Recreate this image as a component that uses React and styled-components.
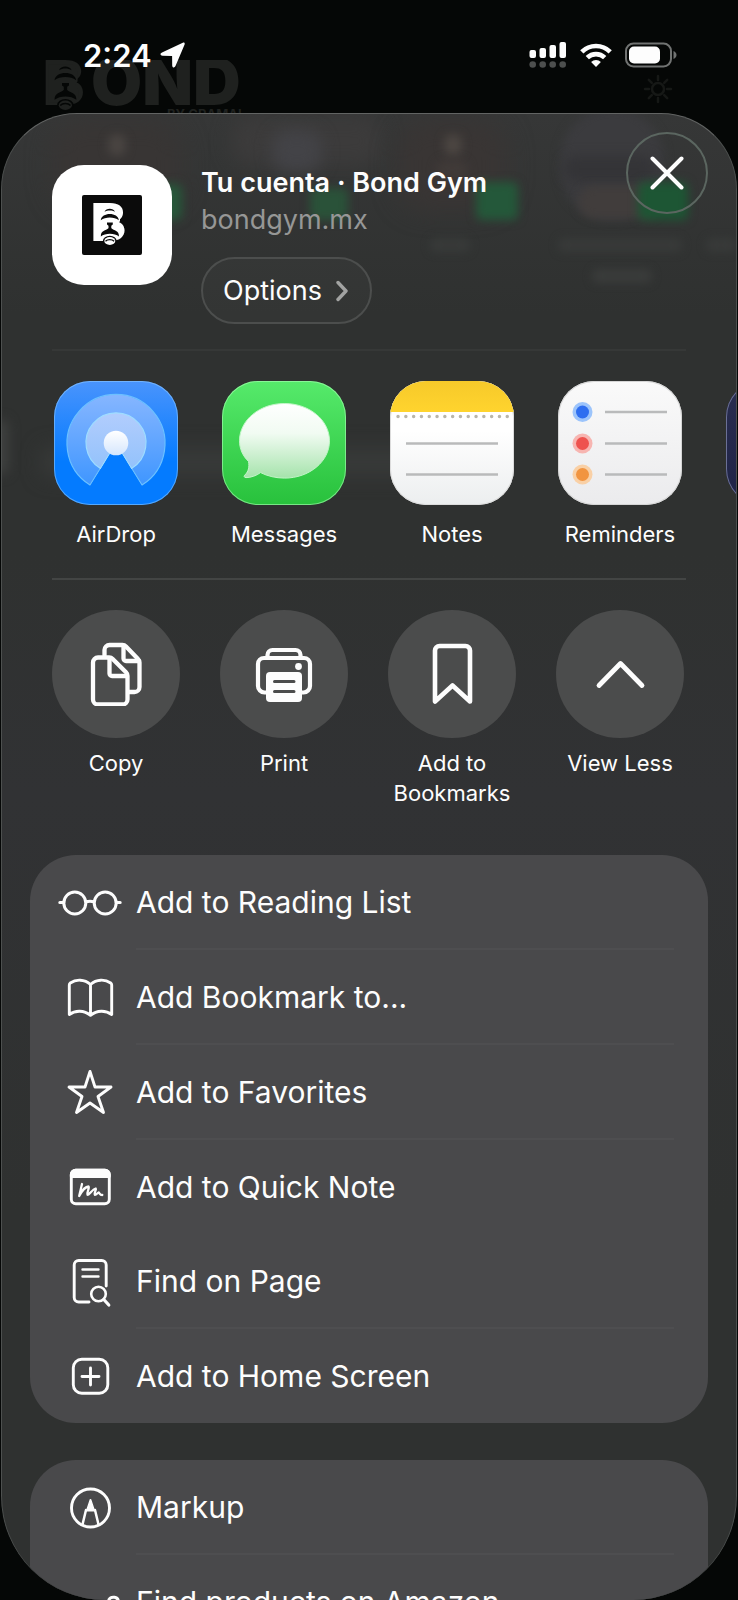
import React from 'react';
import styled, { createGlobalStyle } from 'styled-components';

const WHITE = '#fdfdfd';
const BLACK = '#050706';
const SHEET = '#2f3130';
const CARD = '#49494b';
const CIRCLE = '#4b4c4c';
const GHOST = '#1f211f';
const GREYTEXT = '#969796';

const GlobalStyle = createGlobalStyle`
  * {
    box-sizing: border-box;
  }
  body {
    margin: 0;
    background: ${BLACK};
    color: ${WHITE};
    font-family: Inter, 'Liberation Sans', sans-serif;
  }
  button {
    border: 0;
    padding: 0;
    background: none;
    color: inherit;
    font: inherit;
    cursor: pointer;
  }
  svg {
    display: block;
  }
`;

const Screen = styled.div`
  position: relative;
  height: 100vh;
  overflow: hidden;
  display: flex;
  flex-direction: column;
`;

/* dimmed page that stays behind the sheet */
const DimmedPage = styled.div`
  position: absolute;
  top: 0;
  left: 0;
  right: 0;
  height: 120px;
  padding: 60px 65px 0 45px;
  display: flex;
  justify-content: space-between;
  align-items: flex-start;
`;

const StatusBar = styled.header`
  position: relative;
  flex: none;
  height: 113px;
  padding: 0 60px 3px 83px;
  display: flex;
  align-items: center;
  justify-content: space-between;
`;

const StatusGroup = styled.div`
  display: flex;
  align-items: center;
  gap: ${props => props.$gap}px;
`;

const Clock = styled.span`
  font-size: 31px;
  font-weight: 600;
`;

const Sheet = styled.main`
  position: relative;
  flex: 1;
  min-height: 0;
  margin: 0 1px;
  overflow: hidden;
  border: 1px solid #4d504f;
  border-top-color: #626463;
  border-bottom: 0;
  border-radius: 76px 76px 104px 104px;
  background: linear-gradient(#363737, ${SHEET} 200px, #2f3130 440px, #313234 680px, #2f3130 1100px);
`;

const Glow = styled.div`
  position: absolute;
  left: ${props => props.$x}px;
  top: ${props => props.$y}px;
  width: ${props => props.$w}px;
  height: ${props => props.$h}px;
  border-radius: ${props => props.$r || 6}px;
  background: ${props => props.$color};
  filter: blur(${props => props.$blur || 5}px);
`;

const Content = styled.div`
  position: relative;
`;

const SiteHeader = styled.div`
  display: flex;
  align-items: flex-start;
  padding: 18px 28px 0 50px;
`;

const SiteIcon = styled.div`
  flex: none;
  width: 120px;
  height: 120px;
  margin-top: 33px;
  border-radius: 32px;
  background: #fff;
  display: flex;
  align-items: center;
  justify-content: center;
`;

const SiteInfo = styled.div`
  flex: 1;
  min-width: 0;
  margin: 32px 0 0 29px;
`;

const Title = styled.h1`
  margin: 0;
  font-size: 27px;
  font-weight: 600;
  line-height: 38px;
  white-space: nowrap;
`;

const Domain = styled.p`
  margin: 0;
  font-size: 27px;
  line-height: 36px;
  color: ${GREYTEXT};
`;

const OptionsButton = styled.button`
  margin-top: 19px;
  height: 67px;
  padding: 0 22px 0 20px;
  border: 2px solid #4c4e4d;
  border-radius: 34px;
  background: rgba(255, 255, 255, 0.02);
  display: flex;
  align-items: center;
  gap: 14px;
  font-size: 27px;
`;

const CloseButton = styled.button`
  flex: none;
  width: 82px;
  height: 82px;
  border: 2px solid #5b6660;
  border-radius: 50%;
  display: flex;
  align-items: center;
  justify-content: center;
`;

const Divider = styled.hr`
  height: 2px;
  margin: ${props => props.$top}px 50px 0;
  border: 0;
  background: ${props => props.$color};
`;

const TileRow = styled.div`
  display: flex;
  gap: 40px;
  padding: ${props => props.$top}px 0 0 50px;
`;

const Tile = styled.button`
  flex: none;
  width: 128px;
  display: flex;
  flex-direction: column;
  align-items: center;
  gap: ${props => props.$gap}px;
  font-size: 22px;
  line-height: 30px;
`;

const AppIcon = styled.span`
  width: 124px;
  height: 124px;
  border-radius: 36px;
  overflow: hidden;
  background: ${props => props.$fill};
  box-shadow: inset 0 0 0 1px ${props => props.$edge};
`;

const Circle = styled.span`
  width: 128px;
  height: 128px;
  border-radius: 50%;
  background: ${CIRCLE};
  display: flex;
  align-items: center;
  justify-content: center;
`;

const Card = styled.ul`
  list-style: none;
  margin: ${props => props.$top}px 28px 0;
  padding: 0 34px 0 28px;
  border-radius: 46px;
  background: ${CARD};
`;

const Item = styled.li`
  display: flex;
`;

const ItemButton = styled.button`
  flex: 1;
  display: flex;
  align-items: center;
  gap: 14px;
  text-align: left;
`;

const ItemLabel = styled.span`
  flex: 1;
  height: ${props => (props.$line ? 95 : 94)}px;
  line-height: 95px;
  border-bottom: ${props => (props.$line ? '2px solid #4e4e50' : '0')};
  font-size: 30px;
  white-space: nowrap;
`;

const LineIcon = styled.svg.attrs({
  'aria-hidden': true,
  fill: 'none',
  strokeLinecap: 'round',
  strokeLinejoin: 'round',
})`
  flex: none;
  stroke: ${props => props.$color || WHITE};
`;

// B with a barbell cut out of its stem, the counters are filled in first
const BarbellB = ({ ink, ground }) => (
  <g>
    <text x="9" y="46" fontFamily="Inter" fontWeight="900" fontSize="52" fill={ink}>B</text>
    <path d="M14 12h20l4 6v8l-2 3 3 5v6l-4 4H14z" fill={ink} />
    <path d="M22.500 16.800c1.500-4.200 9-4.200 10.500 0-3-1.800-7.500-1.800-10.500 0z" fill={ground} />
    <path d="M18.800 25.300c.5-8.300 17.500-8.300 18 0-4.500-3.600-13.500-3.600-18 0z" fill={ground} />
    <path d="M25 27.500h5.800v2l-1.500 1.200v4h-2.800v-4l-1.500-1.200z" fill={ground} />
    <path d="M18.800 41.500c0-6.500 5-5.500 7.700-8.200h2.800c2.700 2.700 7.700 1.700 7.700 8.200-4.500-3.800-13.700-3.800-18.200 0z" fill={ground} />
    <ellipse cx="27.800" cy="46" rx="6.900" ry="5.200" fill={ground} />
    <ellipse cx="27.800" cy="46" rx="5.500" ry="3.900" fill={ink} />
    <path d="M23.500 46.200c2-2.200 6.600-2.200 8.600 0" fill="none" stroke={ground} strokeWidth="1.300" />
  </g>
);

const DimmedLogo = () => (
  <svg width="204" height="60" viewBox="0 0 204 60">
    <g transform="translate(-13 -10) scale(1.200)">
      <BarbellB ink={GHOST} ground={BLACK} />
    </g>
    <text x="46" y="45" fontFamily="Inter" fontWeight="900" fontSize="66" fill={GHOST}>OND</text>
    <text x="122" y="59" fontFamily="Inter" fontWeight="700" fontSize="13" fill={GHOST}>BY GRAMAL</text>
  </svg>
);

const Sun = () => (
  <LineIcon width="30" height="60" viewBox="0 0 30 60" $color="#161816" strokeWidth="2.500">
    <circle cx="15" cy="29" r="6" />
    <path d="M15 16v4M15 38v4M2 29h4M24 29h4M5.800 19.800l3 3M21.200 35.200l3 3M24.200 19.800l-3 3M8.800 35.200l-3 3" />
  </LineIcon>
);

const LocationArrow = () => (
  <svg width="26" height="26" viewBox="0 0 26 26" fill={WHITE}>
    <path d="M22.800.8 2 10.500c-2.200 1-1.900 3.300.5 3.300l9.200.1c.3 0 .4.1.4.4l.1 9.200c0 2.400 2.400 2.700 3.300.6L24.500 2.700c.7-1.500-.3-2.500-1.700-1.900z" />
  </svg>
);

const Signal = () => (
  <svg width="38" height="28" viewBox="0 0 38 28" fill={WHITE}>
    <rect x="0.500" y="9" width="6.500" height="8" rx="2" />
    <rect x="10.500" y="7" width="6.500" height="10" rx="2" />
    <rect x="20.500" y="4" width="6.500" height="13" rx="2" />
    <rect x="30.500" y="1" width="6.500" height="16" rx="2" />
    <g fill="#4d4f4e">
      <circle cx="3.700" cy="23.500" r="3.300" />
      <circle cx="13.700" cy="23.500" r="3.300" />
      <circle cx="23.700" cy="23.500" r="3.300" />
      <circle cx="33.700" cy="23.500" r="3.300" />
    </g>
  </svg>
);

const Wifi = () => (
  <svg width="32" height="24" viewBox="0 0 32 24" fill="none" stroke={WHITE} strokeWidth="4.600">
    <path d="M1.800 8.800a20.200 20.200 0 0 1 28.400 0" />
    <path d="M7.300 14.700a12.400 12.400 0 0 1 17.400 0" />
    <path d="M16 24l-4.900-5.100a7.100 7.100 0 0 1 9.800 0z" fill={WHITE} stroke="none" />
  </svg>
);

const Battery = () => (
  <svg width="53" height="26" viewBox="0 0 53 26">
    <rect x="1" y="1.500" width="45" height="23" rx="7.500" fill="none" stroke="#717372" strokeWidth="2" />
    <rect x="4" y="4.500" width="31" height="17" rx="5" fill={WHITE} />
    <path d="M48.500 9c4 1.500 4 6.500 0 8z" fill="#717372" />
  </svg>
);

const AirDrop = () => (
  <svg width="124" height="124" viewBox="0 0 124 124">
    <defs>
      <linearGradient id="airOuter" x1="0" y1="0" x2="0" y2="1">
        <stop offset="0" stopColor="#86b6ff" />
        <stop offset="1" stopColor="#3f96ff" />
      </linearGradient>
      <linearGradient id="airInner" x1="0" y1="0" x2="0" y2="1">
        <stop offset="0" stopColor="#b2cdfd" />
        <stop offset="1" stopColor="#93c2fb" />
      </linearGradient>
      <linearGradient id="airDot" x1="0" y1="0" x2="0" y2="1">
        <stop offset="0" stopColor="#fff" />
        <stop offset="1" stopColor="#d5e6fd" />
      </linearGradient>
    </defs>
    <path d="M36 104a49 49 0 1 1 52 0L62 62z" fill="url(#airOuter)" stroke="#6cc0ff" strokeWidth="1.200" strokeLinejoin="round" />
    <path d="M46.500 87.500a30 30 0 1 1 31 0L62 62z" fill="url(#airInner)" stroke="#9fdcff" strokeWidth="1.200" />
    <path d="M56 73 36.800 104.500a3 3 0 0 1-2 1.500h54.400a3 3 0 0 1-2-1.500L68 73z" fill="#047bff" />
    <circle cx="62" cy="62" r="12.300" fill="url(#airDot)" />
  </svg>
);

const Messages = () => (
  <svg width="124" height="124" viewBox="0 0 124 124">
    <defs>
      <linearGradient id="bubble" x1="0" y1="0" x2="0" y2="1">
        <stop offset="0" stopColor="#fff" />
        <stop offset="0.400" stopColor="#f1fbf2" />
        <stop offset="1" stopColor="#a5e3ab" />
      </linearGradient>
    </defs>
    <path
      d="M62.500 22.500c25 0 45 16.700 45 37.300s-20 37.300-45 37.300c-8.700 0-17-2-24-5.500-4 3-9.500 5-14.500 5-2 0-2.400-1.500-1-2.700 3.500-3.400 4.500-8 3.500-13.400-5.800-5.700-9-12.700-9-20.700 0-20.600 20-37.300 45-37.300z"
      fill="url(#bubble)"
      stroke="#c4f5c9"
      strokeWidth="1"
    />
  </svg>
);

const Notes = () => (
  <svg width="124" height="124" viewBox="0 0 124 124">
    <defs>
      <linearGradient id="notesTop" x1="0" y1="0" x2="0" y2="1">
        <stop offset="0" stopColor="#f6c92a" />
        <stop offset="1" stopColor="#ffd42e" />
      </linearGradient>
    </defs>
    <rect width="124" height="31" fill="url(#notesTop)" />
    <path d="M8 35.500h112" stroke="#b9b6ab" strokeWidth="3.400" strokeLinecap="round" strokeDasharray="0.100 7.700" />
    <path d="M16 62.500h92M16 93.500h92" stroke="#b9babb" strokeWidth="2.500" />
  </svg>
);

const REMINDER_DOTS = [
  { y: 31, color: '#2e6ef0', halo: '#9cc4fb' },
  { y: 62.5, color: '#ee524e', halo: '#f7b5b1' },
  { y: 93.5, color: '#f19440', halo: '#f9d0a6' },
];

const Reminders = () => (
  <svg width="124" height="124" viewBox="0 0 124 124">
    {REMINDER_DOTS.map(dot => (
      <g key={dot.y}>
        <circle cx="24.500" cy={dot.y} r="10" fill={dot.halo} />
        <circle cx="24.500" cy={dot.y} r="6.500" fill={dot.color} />
        <path d={`M47 ${dot.y}h62`} stroke="#b9babb" strokeWidth="2.500" />
      </g>
    ))}
  </svg>
);

const Copy = () => (
  <LineIcon width="64" height="64" viewBox="0 0 64 64" strokeWidth="4.300">
    <path d="M20.500 13.500V8a5 5 0 0 1 5-5h13a5 5 0 0 1 3.500 1.500L54 17a5 5 0 0 1 1.500 3.500V45a5 5 0 0 1-5 5h-6" />
    <path d="M39.500 4v12.500a2.500 2.500 0 0 0 2.500 2.500h13" />
    <path d="M14 15.500h11.200a5 5 0 0 1 3.500 1.500l13.300 13.300a5 5 0 0 1 1.500 3.500v23.700a5 5 0 0 1-5 5H14a5 5 0 0 1-5-5v-37a5 5 0 0 1 5-5z" />
    <path d="M25.500 16.500v15a2.500 2.500 0 0 0 2.500 2.500h14.500" />
  </LineIcon>
);

const Print = () => (
  <LineIcon width="64" height="64" viewBox="0 0 64 64" strokeWidth="4.200">
    <path d="M15.500 15v-2a5 5 0 0 1 5-5h23a5 5 0 0 1 5 5v2" />
    <path d="M14 50.500h-1.500a6.500 6.500 0 0 1-6.500-6.500v-22a6 6 0 0 1 6-6h40a6 6 0 0 1 6 6v22a6.500 6.500 0 0 1-6.500 6.500H50" />
    <rect x="14" y="30" width="36" height="30" rx="4" fill={WHITE} stroke="none" />
    <path d="M22.500 39.500h19.500M22.500 49.500h19.500" style={{ stroke: CIRCLE }} strokeWidth="3" />
    <circle cx="46.500" cy="24.500" r="3.400" fill={WHITE} stroke="none" />
  </LineIcon>
);

const BookmarkIcon = () => (
  <LineIcon width="64" height="64" viewBox="0 0 64 64" strokeWidth="4.600">
    <path d="M15 59.500V8.500a4.500 4.500 0 0 1 4.500-4.500h26a4.500 4.500 0 0 1 4.500 4.500v51L32.500 43.500z" />
  </LineIcon>
);

const ChevronUp = () => (
  <LineIcon width="64" height="64" viewBox="0 0 64 64" strokeWidth="4.800">
    <path d="M11 43.500 32.500 21.500 54 43.500" />
  </LineIcon>
);

const Glasses = () => (
  <LineIcon width="64" height="56" viewBox="0 0 64 56" strokeWidth="3">
    <circle cx="16.800" cy="28" r="11" />
    <circle cx="47.200" cy="28" r="11" />
    <path d="M28 26.800q4-1.200 8 0M1.800 27.500h4M58.200 27.500h4" />
  </LineIcon>
);

const Book = () => (
  <LineIcon width="64" height="56" viewBox="0 0 64 56" strokeWidth="2.900">
    <path d="M32.500 14.500c-6-5.500-14.500-5.500-20.200-1.500-.8.600-1 1-1 2v29.500c6-4.500 14.700-4.500 21.200.8 6.500-5.300 15.200-5.300 21.200-.8V15c0-1-.2-1.400-1-2-5.700-4-14.200-4-20.200 1.500zM32.500 14.500v30" />
  </LineIcon>
);

const Star = () => (
  <LineIcon width="64" height="56" viewBox="0 0 64 56" strokeWidth="2.900">
    <path d="M32 6.500l5 15.500h16l-13 9.500 5.500 16L32 38l-13.500 9.500 5.500-16L11 22h16z" />
  </LineIcon>
);

const QuickNote = () => (
  <LineIcon width="64" height="56" viewBox="0 0 64 56" strokeWidth="2.900">
    <rect x="13.300" y="11.300" width="38" height="33.500" rx="4.500" />
    <path d="M13.300 17.500v-2a4.200 4.200 0 0 1 4.200-4.200h29.600a4.200 4.200 0 0 1 4.200 4.200v2z" fill={WHITE} />
    <path d="M24 25 21.200 37c2.500-5 6.500-9.500 9.300-9.500 1.500 1-2 6-1 8.300 1.200.5 5-5.500 8.300-6.300 1 1-2.300 5-.8 6.300 1.500 0 2.500-2 3.500-2.300 1 0 1 2.500 3.800 2.500" strokeWidth="2.300" />
  </LineIcon>
);

const FindPage = () => (
  <LineIcon width="64" height="56" viewBox="0 0 64 56" strokeWidth="2.900">
    <path d="M31 48H20.700a4.500 4.500 0 0 1-4.500-4.500V11a4.500 4.500 0 0 1 4.500-4.500h23a4.500 4.500 0 0 1 4.500 4.500v21" />
    <path d="M24.500 15.500h16M24.500 22.500h16" strokeWidth="2.400" />
    <circle cx="40.500" cy="40" r="7.300" strokeWidth="2.600" />
    <path d="M45.800 45.500l5 5.500" strokeWidth="3.200" />
  </LineIcon>
);

const HomePlus = () => (
  <LineIcon width="64" height="56" viewBox="0 0 64 56" strokeWidth="2.900">
    <rect x="15.300" y="11.300" width="34.500" height="34" rx="8.500" />
    <path d="M32.500 20v17M24 28.500h17" />
  </LineIcon>
);

const MarkupIcon = () => (
  <LineIcon width="64" height="56" viewBox="0 0 64 56" strokeWidth="2.900">
    <circle cx="32.500" cy="28" r="19" />
    <path d="M24.500 44.500l3.500-14.500M40.500 44.500l-3.500-14.500" strokeWidth="2.500" />
    <path d="M32.500 20l-3.500 10.500h7z" fill={WHITE} strokeWidth="2" />
  </LineIcon>
);

const AmazonMark = () => (
  <LineIcon width="64" height="56" viewBox="0 0 64 56" strokeWidth="3">
    <path d="M51 25.500c2-3.300 9.500-3.500 9.500 3v12M60.500 32c-7-.5-11.500 1-11.500 5.500 0 5.500 7.500 5 11.500 0" />
  </LineIcon>
);

const APPS = [
  { name: 'AirDrop', icon: <AirDrop />, fill: 'linear-gradient(#4a94fc, #047bff 65%)', edge: 'rgba(140, 200, 255, 0.6)' },
  { name: 'Messages', icon: <Messages />, fill: 'linear-gradient(#56ea6b, #28c13c)', edge: 'rgba(170, 255, 180, 0.6)' },
  { name: 'Notes', icon: <Notes />, fill: 'linear-gradient(#fff 40%, #eceeef)', edge: '#dcdcdc' },
  { name: 'Reminders', icon: <Reminders />, fill: 'linear-gradient(#fafafa, #ebebed)', edge: '#d5d5d5' },
];

const ACTIONS = [
  { name: 'Copy', icon: <Copy /> },
  { name: 'Print', icon: <Print /> },
  { name: 'Add to Bookmarks', icon: <BookmarkIcon /> },
  { name: 'View Less', icon: <ChevronUp /> },
];

const PAGE_ITEMS = [
  { name: 'Add to Reading List', icon: <Glasses />, line: true },
  { name: 'Add Bookmark to...', icon: <Book />, line: true },
  { name: 'Add to Favorites', icon: <Star />, line: true },
  { name: 'Add to Quick Note', icon: <QuickNote /> },
  { name: 'Find on Page', icon: <FindPage />, line: true },
  { name: 'Add to Home Screen', icon: <HomePlus /> },
];

const MORE_ITEMS = [
  { name: 'Markup', icon: <MarkupIcon />, line: true },
  { name: 'Find products on Amazon', icon: <AmazonMark /> },
];

// page content seen through the glass, x and y from the sheet's corner
const GLOWS = [
  { x: 50, y: 6, w: 130, h: 90, color: '#383534', blur: 12, r: 30 },
  { x: 106, y: 20, w: 18, h: 22, color: '#4a4542', r: 10 },
  { x: 230, y: 2, w: 150, h: 50, color: '#3c3b3b', blur: 10, r: 20 },
  { x: 270, y: 16, w: 50, h: 42, color: '#434347', blur: 8, r: 16 },
  { x: 395, y: 6, w: 110, h: 90, color: '#393534', blur: 12, r: 30 },
  { x: 442, y: 20, w: 18, h: 22, color: '#4c4642', r: 10 },
  { x: 434, y: 46, w: 32, h: 20, color: '#403a38', r: 10 },
  { x: 558, y: -6, w: 104, h: 112, color: '#3b3b3e', blur: 5, r: 52 },
  { x: 562, y: 42, w: 90, h: 26, color: '#343437', blur: 6, r: 10 },
  { x: 576, y: 72, w: 84, h: 32, color: '#413d3c', blur: 4, r: 30 },
  { x: 146, y: 70, w: 34, h: 36, color: '#27573a' },
  { x: 308, y: 74, w: 38, h: 32, color: '#2a5239' },
  { x: 474, y: 68, w: 42, h: 38, color: '#24583a' },
  { x: 636, y: 68, w: 50, h: 38, color: '#1d5634' },
  { x: 428, y: 124, w: 40, h: 14, color: '#383a39', blur: 4 },
  { x: 556, y: 124, w: 124, h: 14, color: '#383a39', blur: 4 },
  { x: 590, y: 155, w: 60, h: 14, color: '#3a3c3b', blur: 4 },
  { x: 704, y: 124, w: 30, h: 14, color: '#383a39', blur: 4 },
  { x: -10, y: 306, w: 16, h: 54, color: '#3f4140', blur: 6 },
  { x: 40, y: 334, w: 380, h: 28, color: '#383a39', blur: 10 },
];

const List = ({ items, top }) => (
  <Card $top={top}>
    {items.map(item => (
      <Item key={item.name}>
        <ItemButton type="button">
          {item.icon}
          <ItemLabel $line={item.line}>{item.name}</ItemLabel>
        </ItemButton>
      </Item>
    ))}
  </Card>
);

export default function App() {
  return (
    <Screen>
      <GlobalStyle />
      <DimmedPage aria-hidden="true">
        <DimmedLogo />
        <Sun />
      </DimmedPage>
      <StatusBar>
        <StatusGroup $gap={8}>
          <Clock>2:24</Clock>
          <LocationArrow />
        </StatusGroup>
        <StatusGroup $gap={13}>
          <Signal />
          <Wifi />
          <Battery />
        </StatusGroup>
      </StatusBar>
      <Sheet>
        {GLOWS.map(glow => (
          <Glow
            key={`${glow.x}-${glow.y}`}
            $x={glow.x}
            $y={glow.y}
            $w={glow.w}
            $h={glow.h}
            $r={glow.r}
            $color={glow.color}
            $blur={glow.blur}
          />
        ))}
        <Content>
          <SiteHeader>
            <SiteIcon>
              <svg width="60" height="60" viewBox="0 0 60 60">
                <rect width="60" height="60" rx="2" fill="#0b0b0b" />
                <BarbellB ink="#fff" ground="#0b0b0b" />
              </svg>
            </SiteIcon>
            <SiteInfo>
              <Title>Tu cuenta · Bond Gym</Title>
              <Domain>bondgym.mx</Domain>
              <OptionsButton type="button">
                Options
                <LineIcon width="12" height="22" viewBox="0 0 12 22" strokeWidth="3.400" $color="#a2a3a2">
                  <path d="M2 2.500l8 8.500-8 8.500" />
                </LineIcon>
              </OptionsButton>
            </SiteInfo>
            <CloseButton type="button" aria-label="Close">
              <LineIcon width="34" height="34" viewBox="0 0 34 34" strokeWidth="4">
                <path d="M2.500 2.500l29 29M31.500 2.500l-29 29" />
              </LineIcon>
            </CloseButton>
          </SiteHeader>
          <Divider $top={25} $color="#363837" />
          <TileRow $top={30}>
            {APPS.map(app => (
              <Tile key={app.name} type="button" $gap={14}>
                <AppIcon $fill={app.fill} $edge={app.edge}>{app.icon}</AppIcon>
                {app.name}
              </Tile>
            ))}
            <Tile type="button" aria-label="More apps" $gap={14}>
              <AppIcon $fill="linear-gradient(#2a2e50, #1f2347)" $edge="#6b7096" />
            </Tile>
          </TileRow>
          <Divider $top={29} $color="#434544" />
          <TileRow $top={30}>
            {ACTIONS.map(action => (
              <Tile key={action.name} type="button" $gap={10}>
                <Circle>{action.icon}</Circle>
                {action.name}
              </Tile>
            ))}
          </TileRow>
          <List items={PAGE_ITEMS} top={47} />
          <List items={MORE_ITEMS} top={37} />
        </Content>
      </Sheet>
    </Screen>
  );
}
